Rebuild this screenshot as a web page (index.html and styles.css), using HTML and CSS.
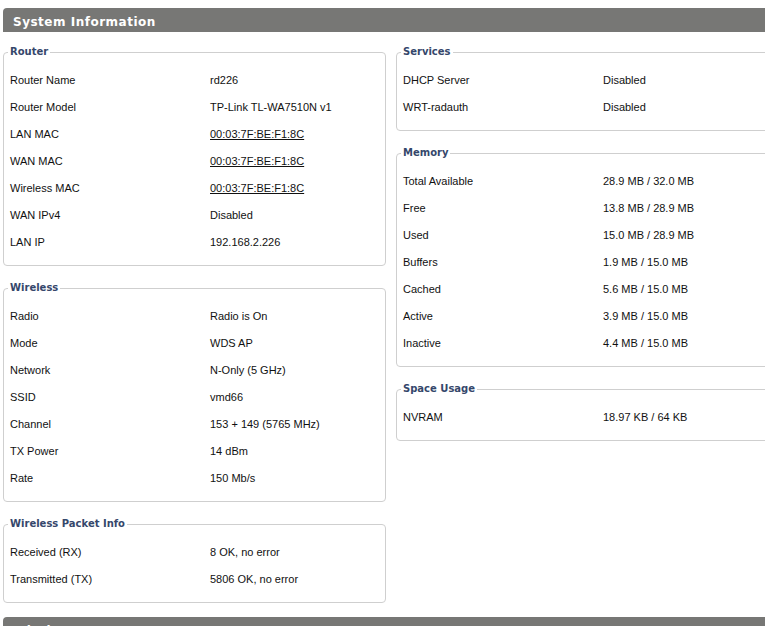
FILE: index.html
```html
<!DOCTYPE html>
<html>
<head>
<meta charset="utf-8">
<title>System Information</title>
<link rel="stylesheet" href="styles.css">
</head>
<body>
<div class="page">
  <div class="section-title">System Information</div>
  <div class="columns">
    <div class="col">
      <fieldset class="box">
        <legend>Router</legend>
        <div class="row"><span class="label">Router Name</span><span class="value">rd226</span></div>
        <div class="row"><span class="label">Router Model</span><span class="value">TP-Link TL-WA7510N v1</span></div>
        <div class="row"><span class="label">LAN MAC</span><span class="value"><a href="#">00:03:7F:BE:F1:8C</a></span></div>
        <div class="row"><span class="label">WAN MAC</span><span class="value"><a href="#">00:03:7F:BE:F1:8C</a></span></div>
        <div class="row"><span class="label">Wireless MAC</span><span class="value"><a href="#">00:03:7F:BE:F1:8C</a></span></div>
        <div class="row"><span class="label">WAN IPv4</span><span class="value">Disabled</span></div>
        <div class="row"><span class="label">LAN IP</span><span class="value">192.168.2.226</span></div>
      </fieldset>
      <fieldset class="box">
        <legend>Wireless</legend>
        <div class="row"><span class="label">Radio</span><span class="value">Radio is On</span></div>
        <div class="row"><span class="label">Mode</span><span class="value">WDS AP</span></div>
        <div class="row"><span class="label">Network</span><span class="value">N-Only (5 GHz)</span></div>
        <div class="row"><span class="label">SSID</span><span class="value">vmd66</span></div>
        <div class="row"><span class="label">Channel</span><span class="value">153 + 149 (5765 MHz)</span></div>
        <div class="row"><span class="label">TX Power</span><span class="value">14 dBm</span></div>
        <div class="row"><span class="label">Rate</span><span class="value">150 Mb/s</span></div>
      </fieldset>
      <fieldset class="box">
        <legend>Wireless Packet Info</legend>
        <div class="row"><span class="label">Received (RX)</span><span class="value">8 OK, no error</span></div>
        <div class="row"><span class="label">Transmitted (TX)</span><span class="value">5806 OK, no error</span></div>
      </fieldset>
    </div>
    <div class="col">
      <fieldset class="box">
        <legend>Services</legend>
        <div class="row"><span class="label">DHCP Server</span><span class="value">Disabled</span></div>
        <div class="row"><span class="label">WRT-radauth</span><span class="value">Disabled</span></div>
      </fieldset>
      <fieldset class="box">
        <legend>Memory</legend>
        <div class="row"><span class="label">Total Available</span><span class="value">28.9 MB / 32.0 MB</span></div>
        <div class="row"><span class="label">Free</span><span class="value">13.8 MB / 28.9 MB</span></div>
        <div class="row"><span class="label">Used</span><span class="value">15.0 MB / 28.9 MB</span></div>
        <div class="row"><span class="label">Buffers</span><span class="value">1.9 MB / 15.0 MB</span></div>
        <div class="row"><span class="label">Cached</span><span class="value">5.6 MB / 15.0 MB</span></div>
        <div class="row"><span class="label">Active</span><span class="value">3.9 MB / 15.0 MB</span></div>
        <div class="row"><span class="label">Inactive</span><span class="value">4.4 MB / 15.0 MB</span></div>
      </fieldset>
      <fieldset class="box">
        <legend>Space Usage</legend>
        <div class="row"><span class="label">NVRAM</span><span class="value">18.97 KB / 64 KB</span></div>
      </fieldset>
    </div>
  </div>
  <div class="section-title">Wireless</div>
</div>
</body>
</html>
```

FILE: styles.css
```css
html, body {
  margin: 0;
  padding: 0;
  background: #fff;
  overflow: hidden;
}
.page {
  width: 782px;
  padding: 8px 0 0 3px;
  font-family: "Liberation Sans", Arial, sans-serif;
  font-size: 11px;
  color: #111;
}
.section-title {
  height: 24px;
  line-height: 29px;
  overflow: hidden;
  background: #777775;
  color: #fff;
  font-family: "DejaVu Sans", Verdana, sans-serif;
  font-weight: bold;
  font-size: 12px;
  letter-spacing: 0.5px;
  padding-left: 10px;
  border-radius: 4px 0 0 0;
}
.columns {
  display: flex;
  gap: 10px;
  margin-top: 13px;
  margin-bottom: 14px;
}
.col {
  width: 383px;
  display: flex;
  flex-direction: column;
  gap: 15px;
}
.box {
  margin: 0;
  border: 1px solid #cfcfcf;
  border-radius: 4px;
  padding: 8px 6px 9px 6px;
  min-width: 0;
}
.box legend {
  padding: 0 2px;
  margin-left: -2px;
  font-family: "DejaVu Sans", Verdana, sans-serif;
  font-weight: bold;
  font-size: 10px;
  line-height: 14px;
  color: #35476b;
}
.row {
  display: grid;
  grid-template-columns: 200px 1fr;
  line-height: 27px;
  height: 27px;
}
.value a {
  color: #111;
  text-decoration: underline;
}
```
